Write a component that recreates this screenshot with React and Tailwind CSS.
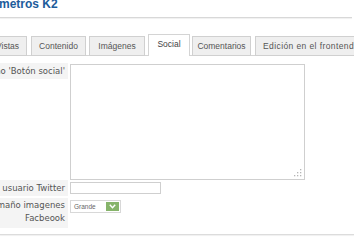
export default function App() {
  const tabs = [
    { t: 'Vistas', w: 'w-[39px]', g: 'ml-[-12px]' },
    { t: 'Contenido', w: 'w-[55px]', g: 'ml-[4px]' },
    { t: 'Imágenes', w: 'w-[56px]', g: 'ml-[3px]' },
    { t: 'Social', w: 'w-[42px]', g: 'ml-[3px]', active: true },
    { t: 'Comentarios', w: 'w-[59px]', g: 'ml-[2px]' },
    { t: 'Edición en el frontend', w: 'w-[120px] text-left pl-[7px] tracking-[0.4px]', g: 'ml-[4px]' },
  ]
  return (
    <div className="w-[354px] h-[248px] overflow-hidden bg-white font-['Liberation_Sans',Arial,sans-serif] text-[#333]">
      <div className="mt-[-3px] ml-[-1px] text-[12px] leading-[14px] font-bold text-[#1d5c9b] whitespace-nowrap">metros K2</div>
      <div className="mt-[6px] h-px w-[352px] bg-[#d8d8d8] shadow-[0_1px_1px_#eee]" />

      <div className="mt-[17px] flex items-end whitespace-nowrap border-b border-[#d4d4d4] h-[21px]">
        {tabs.map(({ t, w, g, active }) => (
          active ? (
            <div key={t} className={`${w} ${g} shrink-0 h-[22px] mb-[-1px] bg-white border border-b-0 border-[#d4d4d4] text-center text-[8.5px] leading-[19px] text-[#444]`}>{t}</div>
          ) : (
            <div key={t} className={`${w} ${g} shrink-0 h-[20px] mb-[-1px] bg-[#efefef] border border-[#d0d0d0] text-center text-[8.5px] leading-[18px] text-[#555]`}>{t}</div>
          )
        ))}
      </div>

      <div className="mt-[7px] ml-[-92px] grid grid-cols-[160px_1fr] gap-x-[2px] font-['DejaVu_Sans',Verdana,sans-serif] text-[8.5px] text-[#555]">
        <div className="h-[16px] bg-[#f4f4f4] text-right pr-[3px] leading-[16px] whitespace-nowrap">Tamaño 'Botón social'</div>
        <div className="relative w-[235px] h-[116px] mt-[1px] border border-[#cfcfcf] bg-white">
          <svg className="absolute right-[2px] bottom-[2px]" width="9" height="9" viewBox="0 0 9 9">
            <g fill="#b5b5b5">
              <rect x="7" y="1" width="1.3" height="1.3" />
              <rect x="4" y="4" width="1.3" height="1.3" />
              <rect x="7" y="4" width="1.3" height="1.3" />
              <rect x="1" y="7" width="1.3" height="1.3" />
              <rect x="4" y="7" width="1.3" height="1.3" />
              <rect x="7" y="7" width="1.3" height="1.3" />
            </g>
          </svg>
        </div>

        <div className="h-[16px] bg-[#f4f4f4] text-right pr-[3px] leading-[16px] whitespace-nowrap">Nombre de usuario Twitter</div>
        <div className="mt-[2px] w-[91px] h-[12px] border border-[#cfcfcf] bg-white" />

        <div className="mt-[2px] h-[30px] bg-[#f4f4f4] text-right pr-[3px] pt-[1px] leading-[13px] whitespace-nowrap">
          <div>Tamaño imagenes</div>
          <div>Facbeook</div>
        </div>
        <div className="mt-[4px] w-[51px] h-[13px] border border-[#d8d8d8] bg-white flex items-center justify-between pl-[3px] pr-[1px]">
          <span className="font-['Liberation_Sans',Arial,sans-serif] text-[6.5px] text-[#666]">Grande</span>
          <span className="w-[13px] h-[9px] bg-[#86b46a] flex items-center justify-center">
            <svg width="7" height="5" viewBox="0 0 7 5">
              <path d="M0.8 0.8 L3.5 3.8 L6.2 0.8" fill="none" stroke="#fff" strokeWidth="1.4" />
            </svg>
          </span>
        </div>
      </div>

      <div className="mt-[6px] h-px w-[354px] bg-[#dcdcdc] shadow-[0_1px_1px_#eee]" />
    </div>
  )
}
